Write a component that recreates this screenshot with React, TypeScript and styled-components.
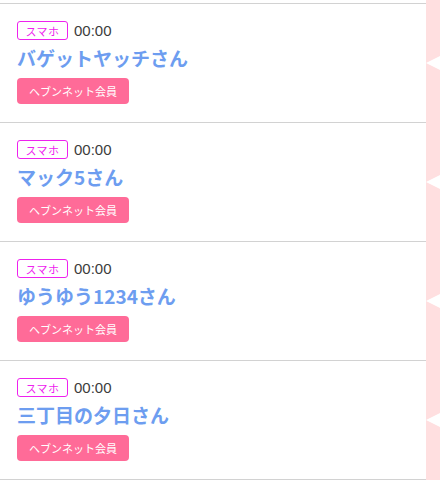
import React from "react";
import styled, { createGlobalStyle } from "styled-components";

const Global = createGlobalStyle`
  html, body { margin: 0; padding: 0; background: #ffffff; }
  body { font-family: "Noto Sans CJK JP", "Noto Sans", sans-serif; }
`;

const Page = styled.div`
  width: 440px;
  height: 480px;
  overflow: hidden;
  display: flex;
  flex-direction: column;
`;

const Row = styled.div`
  display: flex;
`;

const Gap = styled.div<{ $h: number; $line?: boolean }>`
  flex: 1;
  height: ${(p) => p.$h}px;
  box-sizing: border-box;
  background: #ffffff;
  border-top: ${(p) => (p.$line ? "1px solid #d2d2d2" : "none")};
`;

const Item = styled.div`
  flex: 1;
  border-top: 1px solid #d2d2d2;
  padding: 17px 17px 18px;
  display: flex;
  flex-direction: column;
  align-items: flex-start;
`;

const Side = styled.div`
  width: 14px;
  background: #ffdfe0;
  display: flex;
  align-items: center;
`;

const Pointer = styled.div`
  width: 0;
  height: 0;
  border-top: 7px solid transparent;
  border-bottom: 7px solid transparent;
  border-right: 14px solid #ffffff;
`;

const Meta = styled.div`
  display: flex;
  align-items: center;
  gap: 6px;
  height: 19px;
  margin-bottom: 2px;
`;

const Device = styled.span`
  box-sizing: border-box;
  height: 19px;
  width: 51px;
  border: 1px solid #ee22ee;
  border-radius: 3px;
  color: #ee22ee;
  font-size: 11px;
  display: flex;
  align-items: center;
  justify-content: center;
  letter-spacing: 0.5px;
`;

const Time = styled.span`
  font-family: "Liberation Sans", Arial, sans-serif;
  font-size: 15px;
  color: #3c3c3c;
`;

const Name = styled.div`
  margin-top: 3px;
  font-size: 19px;
  line-height: 25px;
  font-weight: 700;
  color: #6d9df0;
`;

const Member = styled.span`
  margin-top: 8px;
  box-sizing: border-box;
  height: 26px;
  width: 112px;
  border-radius: 4px;
  background: #ff6b98;
  color: #ffffff;
  font-size: 11px;
  display: flex;
  align-items: center;
  justify-content: center;
`;

const entries = ["バゲットヤッチさん", "マック5さん", "ゆうゆう1234さん", "三丁目の夕日さん"];

export default function App() {
  return (
    <Page>
      <Global />
      <Row>
        <Gap $h={3} />
        <Side />
      </Row>
      {entries.map((name) => (
        <Row key={name}>
          <Item>
            <Meta>
              <Device>スマホ</Device>
              <Time>00:00</Time>
            </Meta>
            <Name>{name}</Name>
            <Member>ヘブンネット会員</Member>
          </Item>
          <Side>
            <Pointer />
          </Side>
        </Row>
      ))}
      <Row>
        <Gap $h={10} $line />
        <Side />
      </Row>
    </Page>
  );
}
